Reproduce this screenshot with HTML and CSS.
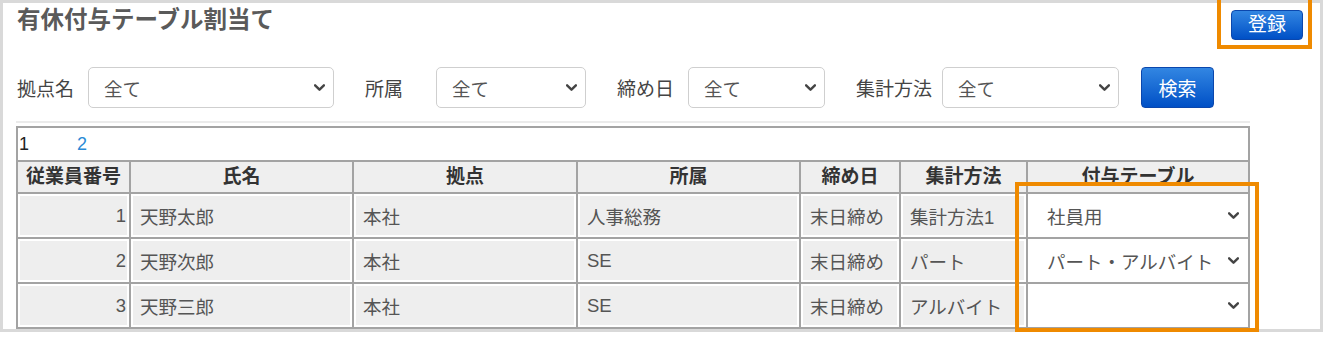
FILE: index.html
```html
<!DOCTYPE html>
<html lang="ja">
<head>
<meta charset="utf-8">
<title>有休付与テーブル割当て</title>
<link rel="stylesheet" href="styles.css">
</head>
<body>
<div class="frame">
  <div class="topbar">
    <h1 class="title">有休付与テーブル割当て</h1>
    <button class="btn btn-register">登録</button>
  </div>

  <div class="filters">
    <span class="flabel">拠点名</span>
    <div class="select sel-base"><span>全て</span><svg class="chev" viewBox="0 0 10 6"><path d="M1 1l4 4 4-4"/></svg></div>
    <span class="flabel">所属</span>
    <div class="select sel-dept"><span>全て</span><svg class="chev" viewBox="0 0 10 6"><path d="M1 1l4 4 4-4"/></svg></div>
    <span class="flabel">締め日</span>
    <div class="select sel-close"><span>全て</span><svg class="chev" viewBox="0 0 10 6"><path d="M1 1l4 4 4-4"/></svg></div>
    <span class="flabel flabel-wide">集計方法</span>
    <div class="select sel-method"><span>全て</span><svg class="chev" viewBox="0 0 10 6"><path d="M1 1l4 4 4-4"/></svg></div>
    <button class="btn btn-search">検索</button>
  </div>

  <div class="sep"></div>

  <div class="grid-wrap">
    <div class="pager"><span class="pg pg-current">1</span><a class="pg pg-link">2</a></div>
    <div class="grid">
      <div class="row row-head">
        <div class="cell">従業員番号</div>
        <div class="cell">氏名</div>
        <div class="cell">拠点</div>
        <div class="cell">所属</div>
        <div class="cell">締め日</div>
        <div class="cell">集計方法</div>
        <div class="cell">付与テーブル</div>
      </div>
      <div class="row row-body">
        <div class="cell num">1</div>
        <div class="cell">天野太郎</div>
        <div class="cell">本社</div>
        <div class="cell">人事総務</div>
        <div class="cell">末日締め</div>
        <div class="cell">集計方法1</div>
        <div class="cell cell-select"><span>社員用</span><svg class="chev" viewBox="0 0 10 6"><path d="M1 1l4 4 4-4"/></svg></div>
      </div>
      <div class="row row-body">
        <div class="cell num">2</div>
        <div class="cell">天野次郎</div>
        <div class="cell">本社</div>
        <div class="cell">SE</div>
        <div class="cell">末日締め</div>
        <div class="cell">パート</div>
        <div class="cell cell-select"><span>パート・アルバイト</span><svg class="chev" viewBox="0 0 10 6"><path d="M1 1l4 4 4-4"/></svg></div>
      </div>
      <div class="row row-body">
        <div class="cell num">3</div>
        <div class="cell">天野三郎</div>
        <div class="cell">本社</div>
        <div class="cell">SE</div>
        <div class="cell">末日締め</div>
        <div class="cell">アルバイト</div>
        <div class="cell cell-select"><span></span><svg class="chev" viewBox="0 0 10 6"><path d="M1 1l4 4 4-4"/></svg></div>
      </div>
      <div class="row row-body row-clipped">
        <div class="cell"></div>
        <div class="cell"></div>
        <div class="cell"></div>
        <div class="cell"></div>
        <div class="cell"></div>
        <div class="cell"></div>
        <div class="cell cell-select"></div>
      </div>
    </div>
  </div>
</div>
<div class="hl hl-register"></div>
<div class="hl hl-table"></div>
</body>
</html>
```

FILE: styles.css
```css
* { box-sizing: border-box; }
html, body { margin: 0; padding: 0; background: #fff; }
body {
  position: relative;
  width: 1330px;
  height: 339px;
  overflow: hidden;
  font-family: "Liberation Sans", "Noto Sans CJK JP", sans-serif;
  color: #555;
}
.frame {
  width: 1323px;
  height: 332px;
  border: 3px solid #d9d9d9;
  background: #fff;
  overflow: hidden;
}
.topbar {
  display: flex;
  justify-content: space-between;
  align-items: flex-start;
  padding: 3px 17px 0 14px;
  height: 37px;
}
.title {
  margin: 0;
  font-size: 23.5px;
  line-height: 29px;
  font-weight: bold;
  color: #5a5a5a;
}
.btn {
  font-family: inherit;
  color: #fff;
  border: 1px solid #0b47ad;
  border-radius: 4px;
  background: linear-gradient(#3286e2, #0050c6);
  padding: 0;
  cursor: pointer;
}
.btn-register {
  margin-top: 4px;
  width: 72px;
  height: 30px;
  font-size: 19px;
  line-height: 28px;
}
.filters {
  display: flex;
  align-items: center;
  margin-top: 27px;
  height: 41px;
  padding-left: 14px;
}
.flabel {
  width: 71px;
  font-size: 19px;
  color: #444;
  white-space: nowrap;
}
.flabel-wide { width: 86px; }
.select {
  display: flex;
  align-items: center;
  justify-content: space-between;
  height: 41px;
  border: 1px solid #cfcfcf;
  border-radius: 5px;
  padding: 0 8px 0 15px;
  font-size: 18.5px;
  color: #555;
  margin-right: 31px;
  background: #fff;
}
.sel-base { width: 246px; }
.sel-dept { width: 150px; }
.sel-close { width: 137px; }
.sel-method { width: 177px; margin-right: 22px; }
.chev {
  width: 11px;
  height: 7px;
  fill: none;
  stroke: #444;
  stroke-width: 2.2;
  stroke-linecap: round;
  stroke-linejoin: round;
  flex: none;
}
.btn-search {
  width: 73px;
  height: 41px;
  font-size: 19px;
  border-radius: 4px;
}
.sep {
  margin: 13px 0 0 13px;
  width: 1234px;
  height: 2px;
  background: #ebebeb;
}
.grid-wrap {
  margin: 3px 0 0 13px;
  width: 1234px;
  border: 2px solid #a3a3a3;
  border-bottom: none;
}
.pager {
  height: 32px;
  line-height: 32px;
  font-size: 18px;
  padding-left: 1px;
  background: #fff;
}
.pg-current { color: #222; }
.pg-link { color: #2a8ad6; margin-left: 48px; text-decoration: none; }
.row {
  display: grid;
  grid-template-columns: 111px 223px 224px 223px 100px 127px 222px;
}
.cell {
  border-top: 2px solid #a3a3a3;
  border-left: 2px solid #a3a3a3;
  white-space: nowrap;
  overflow: hidden;
}
.cell:first-child { border-left: none; }
.row-head .cell {
  height: 32px;
  line-height: 30px;
  text-align: center;
  font-size: 19px;
  font-weight: bold;
  color: #333;
  background: #efefef;
}
.row-body .cell {
  height: 45px;
  display: flex;
  align-items: center;
  padding-left: 9px;
  font-size: 18.5px;
  color: #555;
  background: #eeeeee;
  box-shadow: inset 0 0 0 2px #fff;
}
.row-body .num {
  justify-content: flex-end;
  padding: 0 3px 0 0;
}
.row-body .cell-select {
  background: #fff;
  box-shadow: none;
  justify-content: space-between;
  padding: 0 9px 0 19px;
}
.hl {
  position: absolute;
  border: 4px solid #ef8a00;
  pointer-events: none;
}
.hl-register {
  left: 1217px;
  top: -4px;
  width: 95px;
  height: 53px;
}
.hl-table {
  left: 1015px;
  top: 182px;
  width: 244px;
  height: 150px;
}
```
